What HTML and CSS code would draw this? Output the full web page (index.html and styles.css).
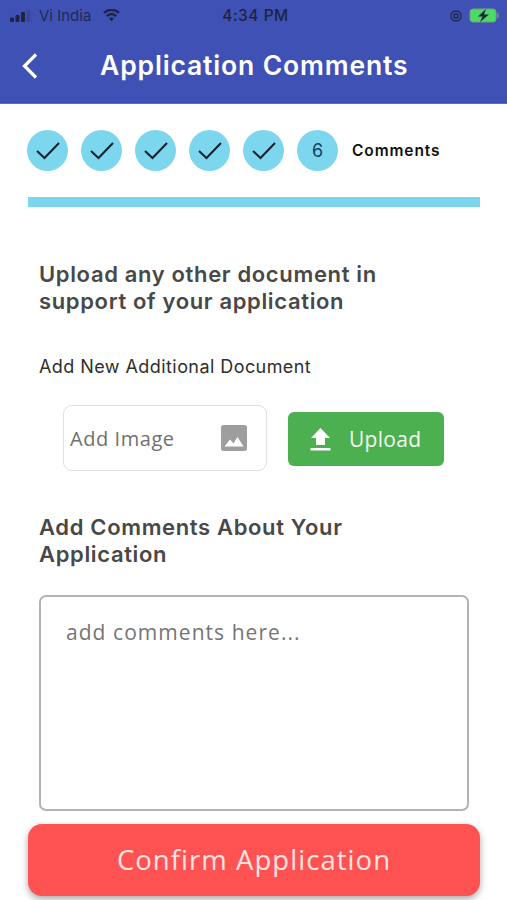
FILE: index.html
```html
<!DOCTYPE html>
<html lang="en">
<head>
<meta charset="utf-8">
<title>Application Comments</title>
<link rel="stylesheet" href="styles.css">
</head>
<body>
<div class="screen">
  <header class="header">
    <div class="status">
      <div class="status-left">
        <svg class="signal" width="21" height="12" viewBox="0 0 21 12"><rect x="0" y="7.500" width="4" height="4.500" rx="1.200" fill="#1c2440"/><rect x="5.500" y="5" width="4" height="7" rx="1.200" fill="#1c2440"/><rect x="11" y="2" width="4" height="10" rx="1.200" fill="#1c2440"/><rect x="16.500" y="0" width="4" height="12" rx="1.200" fill="#1c2440" opacity=".22"/></svg>
        <span>Vi India</span>
        <svg class="wifi" width="17" height="13" viewBox="0 0 19 14"><path d="M9.500 13.500 L6.800 10.400 A4 4 0 0 1 12.200 10.400Z M5.300 8.700 L3.400 6.600 A9 9 0 0 1 15.600 6.600 L13.700 8.700 A6.300 6.300 0 0 0 5.300 8.700Z M2 5 L0.300 3.100 A13.500 13.500 0 0 1 18.700 3.100 L17 5 A11 11 0 0 0 2 5Z" fill="#1c2440"/></svg>
      </div>
      <div class="status-time">4:34 PM</div>
      <div class="status-right">
        <svg width="14" height="14" viewBox="0 0 14 14"><circle cx="7" cy="7" r="5.200" fill="none" stroke="#1c2440" stroke-width="1.200"/><circle cx="7" cy="7" r="2" fill="none" stroke="#1c2440" stroke-width="1.400"/></svg>
        <svg width="32" height="15" viewBox="0 0 32 15"><rect x="1" y="1" width="26" height="13" rx="3" fill="#4cd964" stroke="#7f9a8a" stroke-width="1"/><rect x="28" y="5" width="2" height="5" rx="1" fill="#4cd964" opacity=".5"/><path d="M17 1 L9 8.500 H13.500 L11 14 L20 6.500 H15Z" fill="#1c2440"/></svg>
      </div>
    </div>
    <div class="nav">
      <svg class="back" width="18" height="28" viewBox="0 0 18 28"><path d="M15 2.500 L3.500 14 L15 25.500" fill="none" stroke="#fff" stroke-width="3.200"/></svg>
      <h1 class="title">Application Comments</h1>
    </div>
  </header>

  <main class="content">
    <div class="steps">
      <div class="step"><svg width="24" height="19" viewBox="0 0 24 19"><path d="M1 10 L8.500 17 L23 2" fill="none" stroke="#14202c" stroke-width="2"/></svg></div>
      <div class="step"><svg width="24" height="19" viewBox="0 0 24 19"><path d="M1 10 L8.500 17 L23 2" fill="none" stroke="#14202c" stroke-width="2"/></svg></div>
      <div class="step"><svg width="24" height="19" viewBox="0 0 24 19"><path d="M1 10 L8.500 17 L23 2" fill="none" stroke="#14202c" stroke-width="2"/></svg></div>
      <div class="step"><svg width="24" height="19" viewBox="0 0 24 19"><path d="M1 10 L8.500 17 L23 2" fill="none" stroke="#14202c" stroke-width="2"/></svg></div>
      <div class="step"><svg width="24" height="19" viewBox="0 0 24 19"><path d="M1 10 L8.500 17 L23 2" fill="none" stroke="#14202c" stroke-width="2"/></svg></div>
      <div class="step step-num">6</div>
      <div class="step-label">Comments</div>
    </div>
    <div class="progress"></div>

    <h2 class="heading heading-upload">Upload any other document in<br>support of your application</h2>
    <div class="sublabel">Add New Additional Document</div>

    <div class="upload-row">
      <div class="image-field">
        <span>Add Image</span>
        <svg width="26" height="26" viewBox="0 0 26 26"><rect width="26" height="26" rx="2.500" fill="#9e9e9e"/><path d="M3.500 21.500 L9 14.500 L12.500 18.500 L16.500 12 L22.500 21.500Z" fill="#fff"/></svg>
      </div>
      <div class="upload-btn">
        <svg width="21" height="24" viewBox="0 0 21 24"><path d="M10.500 1 L20 11 H15 V18 H6 V11 H1Z M0.500 21 H20.500 V23.500 H0.500Z" fill="#fff"/></svg>
        <span>Upload</span>
      </div>
    </div>

    <h2 class="heading heading-comments">Add Comments About Your<br>Application</h2>
    <div class="comment-box">add comments here...</div>

    <div class="confirm">Confirm Application</div>
  </main>
</div>
</body>
</html>
```

FILE: styles.css
```css
* { box-sizing: border-box; }
html, body { margin: 0; padding: 0; background: #fff; }
.screen { width: 507px; height: 900px; overflow: hidden; font-family: "Inter", "Liberation Sans", sans-serif; position: relative; }

.header { height: 104px; background: #3f51b5; border-bottom: 1px solid #5a6cc8; }
.status { height: 31px; padding: 0 6px 0 10px; display: grid; grid-template-columns: 1fr auto 1fr; align-items: center; color: #1c2440; font-size: 15px; }
.status-left { display: flex; align-items: center; gap: 8px; color: #1f2a55; }
.wifi { margin-left: 4px; }
.status-time { font-weight: 500; font-size: 15.500px; color: #1c2440; letter-spacing: .5px; }
.status-right { display: flex; align-items: center; justify-content: flex-end; gap: 6px; }
.nav { height: 72px; display: flex; align-items: center; padding: 0 0 5px 21px; }
.back { flex: none; margin-top: 2px; }
.title { margin: 0 0 0 61px; font-size: 26.500px; font-weight: 600; color: #fff; letter-spacing: .85px; white-space: nowrap; }

.content { padding: 26px 27px 0 28px; }
.steps { display: flex; align-items: center; gap: 13px; height: 41px; margin-left: -1px; }
.step { width: 41px; height: 41px; border-radius: 50%; background: #7bd6ee; display: flex; align-items: center; justify-content: center; flex: none; }
.step-num { font-size: 18px; color: #17405c; }
.step-label { font-size: 15.500px; font-weight: 600; color: #111; margin-left: 1px; letter-spacing: .9px; }
.progress { height: 10px; background: #7bd6ee; margin-top: 26px; }

.heading { margin: 0 0 0 11px; font-size: 22px; line-height: 27px; font-weight: 600; color: #484848; letter-spacing: .65px; }
.heading-upload { margin-top: 54px; }
.sublabel { margin: 41px 0 0 11px; font-size: 18px; line-height: 22px; color: #2e2e2e; letter-spacing: .43px; }

.upload-row { display: flex; align-items: center; margin: 27px 0 0 35px; gap: 21px; }
.image-field { width: 204px; height: 66px; border: 1.500px solid #dfdfdf; border-radius: 9px; padding: 0 19px 0 6px; display: flex; align-items: center; justify-content: space-between; font-family: "Open Sans", "Liberation Sans", sans-serif; font-size: 20px; letter-spacing: .55px; color: #707070; }
.upload-btn { width: 156px; height: 54px; margin-top: 2px; background: #4caf50; border-radius: 6px; display: flex; align-items: center; gap: 18px; padding-left: 22px; color: #f2f9f2; font-family: "Open Sans", "Liberation Sans", sans-serif; font-size: 21px; letter-spacing: .3px; }

.heading-comments { margin-top: 43px; }
.comment-box { margin: 27px 11px 0 11px; height: 216px; border: 2px solid #b3b3b3; border-radius: 7px; padding: 21px 25px; font-family: "Open Sans", "Liberation Sans", sans-serif; font-size: 21px; letter-spacing: 1.050px; line-height: 28px; color: #757575; }
.confirm { margin-top: 13px; height: 72px; background: #ff5252; border-radius: 14px; box-shadow: 0 3px 7px rgba(0,0,0,.35); display: flex; align-items: center; justify-content: center; padding-bottom: 2px; color: #ffe3e1; font-family: "Open Sans", "Liberation Sans", sans-serif; font-size: 27.500px; letter-spacing: 1.050px; }
```
